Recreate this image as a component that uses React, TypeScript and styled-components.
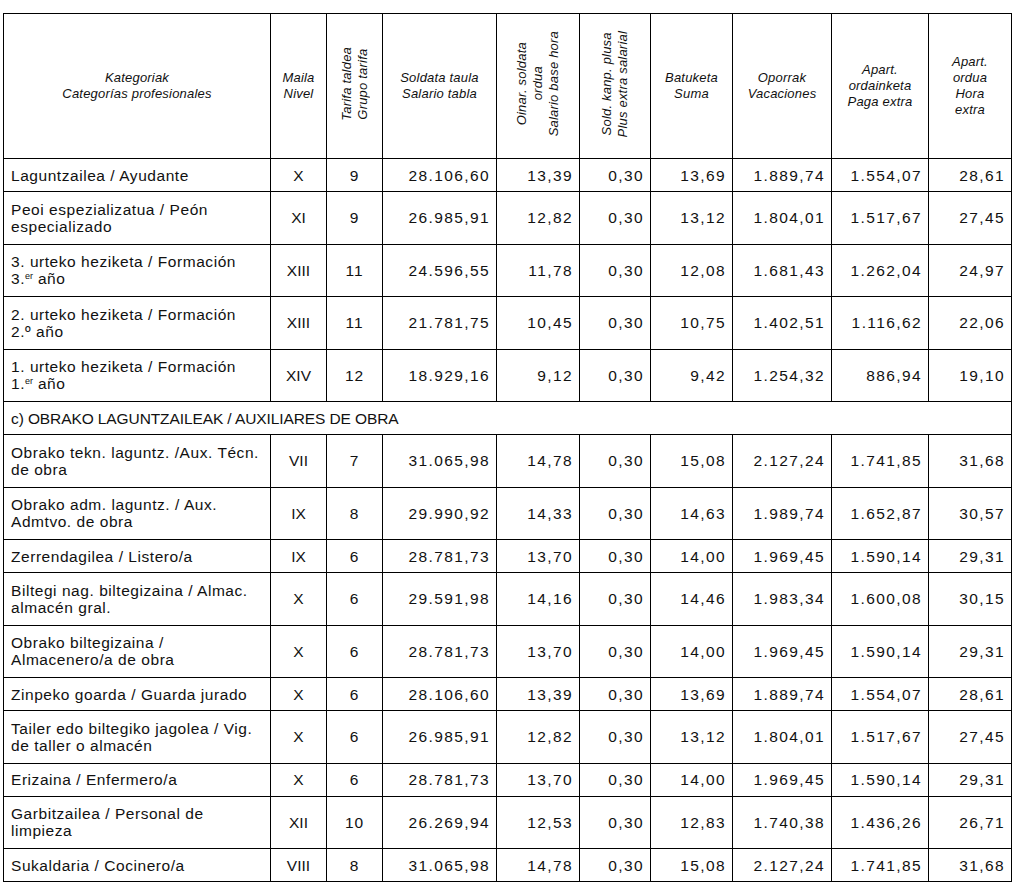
import React from 'react';
import styled, { createGlobalStyle } from 'styled-components';

type Row = {
  name: React.ReactNode;
  tall?: boolean;
  level: string;
  group: string;
  values: string[];
};

const GlobalStyle = createGlobalStyle`
  body {
    margin: 0;
    background: #fff;
  }
`;

const Page = styled.div`
  padding: 13px 0 0 3px;
`;

const Table = styled.table`
  border-collapse: collapse;
  table-layout: fixed;
  width: 1009px;
  font-family: 'Liberation Sans', Arial, sans-serif;
  color: #111;
`;

const Col = styled.col<{ $w: number }>`
  width: ${(p) => p.$w}px;
`;

const HeadCell = styled.th`
  height: 144px;
  padding: 0 3px;
  border: 1px solid #000;
  font-size: 13px;
  font-style: italic;
  font-weight: normal;
  line-height: 16px;
  letter-spacing: 0.2px;
  text-align: center;
  vertical-align: middle;
`;

const Vertical = styled.span`
  display: inline-block;
  writing-mode: vertical-rl;
  transform: rotate(180deg);
  white-space: nowrap;
  text-align: center;
`;

const BodyRow = styled.tr<{ $tall?: boolean }>`
  height: ${(p) => (p.$tall ? '52.5px' : '33px')};
`;

const BaseCell = styled.td`
  border: 1px solid #000;
  font-size: 15.5px;
  line-height: 17px;
  vertical-align: middle;
  white-space: nowrap;
`;

const NameCell = styled(BaseCell)`
  padding: 0 0 0 7px;
  letter-spacing: 0.55px;
  text-align: left;
`;

const SectionCell = styled(BaseCell)`
  padding: 0 0 0 7px;
  letter-spacing: -0.1px;
  text-align: left;
`;

const CenterCell = styled(BaseCell)<{ $digits?: boolean }>`
  padding: 0;
  letter-spacing: ${(p) => (p.$digits ? '1px' : '0')};
  text-align: center;
`;

const NumberCell = styled(BaseCell)`
  padding: 0 6px 0 0;
  letter-spacing: 1.4px;
  text-align: right;
`;

const Sup = styled.sup`
  font-size: 9px;
  line-height: 0;
  letter-spacing: 0;
  vertical-align: 5px;
`;

const widths = [267, 56, 56, 114, 83, 71, 82, 99, 97, 83];

const firstRows: Row[] = [
  {
    name: 'Laguntzailea / Ayudante',
    level: 'X',
    group: '9',
    values: ['28.106,60', '13,39', '0,30', '13,69', '1.889,74', '1.554,07', '28,61'],
  },
  {
    name: (
      <>
        Peoi espezializatua / Peón
        <br />
        especializado
      </>
    ),
    tall: true,
    level: 'XI',
    group: '9',
    values: ['26.985,91', '12,82', '0,30', '13,12', '1.804,01', '1.517,67', '27,45'],
  },
  {
    name: (
      <>
        3. urteko heziketa / Formación
        <br />
        3.<Sup>er</Sup> año
      </>
    ),
    tall: true,
    level: 'XIII',
    group: '11',
    values: ['24.596,55', '11,78', '0,30', '12,08', '1.681,43', '1.262,04', '24,97'],
  },
  {
    name: (
      <>
        2. urteko heziketa / Formación
        <br />
        2.º año
      </>
    ),
    tall: true,
    level: 'XIII',
    group: '11',
    values: ['21.781,75', '10,45', '0,30', '10,75', '1.402,51', '1.116,62', '22,06'],
  },
  {
    name: (
      <>
        1. urteko heziketa / Formación
        <br />
        1.<Sup>er</Sup> año
      </>
    ),
    tall: true,
    level: 'XIV',
    group: '12',
    values: ['18.929,16', '9,12', '0,30', '9,42', '1.254,32', '886,94', '19,10'],
  },
];

const auxRows: Row[] = [
  {
    name: (
      <>
        Obrako tekn. laguntz. /Aux. Técn.
        <br />
        de obra
      </>
    ),
    tall: true,
    level: 'VII',
    group: '7',
    values: ['31.065,98', '14,78', '0,30', '15,08', '2.127,24', '1.741,85', '31,68'],
  },
  {
    name: (
      <>
        Obrako adm. laguntz. / Aux.
        <br />
        Admtvo. de obra
      </>
    ),
    tall: true,
    level: 'IX',
    group: '8',
    values: ['29.990,92', '14,33', '0,30', '14,63', '1.989,74', '1.652,87', '30,57'],
  },
  {
    name: 'Zerrendagilea / Listero/a',
    level: 'IX',
    group: '6',
    values: ['28.781,73', '13,70', '0,30', '14,00', '1.969,45', '1.590,14', '29,31'],
  },
  {
    name: (
      <>
        Biltegi nag. biltegizaina / Almac.
        <br />
        almacén gral.
      </>
    ),
    tall: true,
    level: 'X',
    group: '6',
    values: ['29.591,98', '14,16', '0,30', '14,46', '1.983,34', '1.600,08', '30,15'],
  },
  {
    name: (
      <>
        Obrako biltegizaina /
        <br />
        Almacenero/a de obra
      </>
    ),
    tall: true,
    level: 'X',
    group: '6',
    values: ['28.781,73', '13,70', '0,30', '14,00', '1.969,45', '1.590,14', '29,31'],
  },
  {
    name: 'Zinpeko goarda / Guarda jurado',
    level: 'X',
    group: '6',
    values: ['28.106,60', '13,39', '0,30', '13,69', '1.889,74', '1.554,07', '28,61'],
  },
  {
    name: (
      <>
        Tailer edo biltegiko jagolea / Vig.
        <br />
        de taller o almacén
      </>
    ),
    tall: true,
    level: 'X',
    group: '6',
    values: ['26.985,91', '12,82', '0,30', '13,12', '1.804,01', '1.517,67', '27,45'],
  },
  {
    name: 'Erizaina / Enfermero/a',
    level: 'X',
    group: '6',
    values: ['28.781,73', '13,70', '0,30', '14,00', '1.969,45', '1.590,14', '29,31'],
  },
  {
    name: (
      <>
        Garbitzailea / Personal de
        <br />
        limpieza
      </>
    ),
    tall: true,
    level: 'XII',
    group: '10',
    values: ['26.269,94', '12,53', '0,30', '12,83', '1.740,38', '1.436,26', '26,71'],
  },
  {
    name: 'Sukaldaria / Cocinero/a',
    level: 'VIII',
    group: '8',
    values: ['31.065,98', '14,78', '0,30', '15,08', '2.127,24', '1.741,85', '31,68'],
  },
];

const DataRow = ({ row }: { row: Row }) => (
  <BodyRow $tall={row.tall}>
    <NameCell>{row.name}</NameCell>
    <CenterCell>{row.level}</CenterCell>
    <CenterCell $digits>{row.group}</CenterCell>
    {row.values.map((v, i) => (
      <NumberCell key={i}>{v}</NumberCell>
    ))}
  </BodyRow>
);

export default function App() {
  return (
    <Page>
      <GlobalStyle />
      <Table>
        <colgroup>
          {widths.map((w, i) => (
            <Col key={i} $w={w} />
          ))}
        </colgroup>
        <thead>
          <tr>
            <HeadCell>
              Kategoriak
              <br />
              Categorías profesionales
            </HeadCell>
            <HeadCell>
              Maila
              <br />
              Nivel
            </HeadCell>
            <HeadCell>
              <Vertical>
                Tarifa taldea
                <br />
                Grupo tarifa
              </Vertical>
            </HeadCell>
            <HeadCell>
              Soldata taula
              <br />
              Salario tabla
            </HeadCell>
            <HeadCell>
              <Vertical>
                Oinar. soldata
                <br />
                ordua
                <br />
                Salario base hora
              </Vertical>
            </HeadCell>
            <HeadCell>
              <Vertical>
                Sold. kanp. plusa
                <br />
                Plus extra salarial
              </Vertical>
            </HeadCell>
            <HeadCell>
              Batuketa
              <br />
              Suma
            </HeadCell>
            <HeadCell>
              Oporrak
              <br />
              Vacaciones
            </HeadCell>
            <HeadCell>
              Apart.
              <br />
              ordainketa
              <br />
              Paga extra
            </HeadCell>
            <HeadCell>
              Apart.
              <br />
              ordua
              <br />
              Hora
              <br />
              extra
            </HeadCell>
          </tr>
        </thead>
        <tbody>
          {firstRows.map((r, i) => (
            <DataRow key={`a${i}`} row={r} />
          ))}
          <BodyRow>
            <SectionCell colSpan={10}>c) OBRAKO LAGUNTZAILEAK / AUXILIARES DE OBRA</SectionCell>
          </BodyRow>
          {auxRows.map((r, i) => (
            <DataRow key={`b${i}`} row={r} />
          ))}
        </tbody>
      </Table>
    </Page>
  );
}
